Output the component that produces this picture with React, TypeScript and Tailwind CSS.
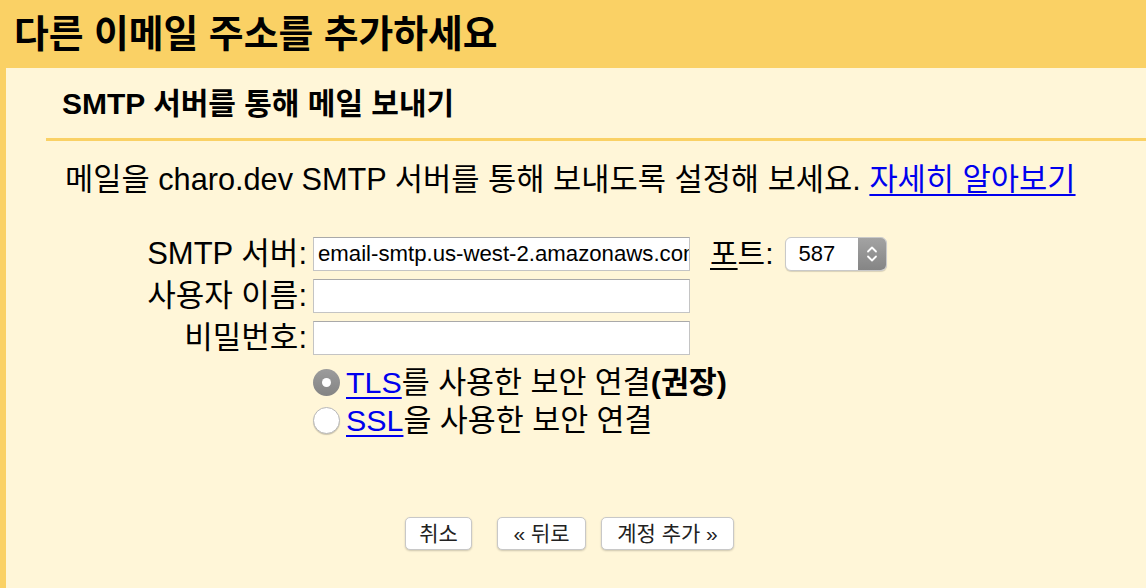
const FONT = "font-['Liberation_Sans','Noto_Sans_CJK_KR',sans-serif]";

function Field({ label, value, accent }: { label: string; value?: string; accent?: boolean }) {
  return (
    <>
      <label className="text-right text-[31px] leading-[34px] text-black">{label}</label>
      <div className="flex items-center gap-[20px]">
        <div className="h-[34px] w-[377px] overflow-hidden whitespace-nowrap border border-[#c4c4c4] border-t-[#a9a9a9] bg-white pl-[4px] text-[22.2px] leading-[32px] text-black">
          {value}
        </div>
        {accent && (
          <div className="flex items-center gap-[11px]">
            <span className="text-[30px] leading-[34px] text-black">
              <span className="underline decoration-[1.5px] underline-offset-[4px]">포</span>트:
            </span>
            <div className="flex h-[34px] w-[102px] overflow-hidden rounded-[6px] border border-[#c9c9c9] bg-white shadow-[0_1px_1px_rgba(0,0,0,0.15)]">
              <span className="flex-1 pl-[13px] text-[22px] leading-[32px] text-black">587</span>
              <span className="flex w-[28px] items-center justify-center bg-gradient-to-b from-[#a3a3a3] to-[#858585]">
                <svg width="14" height="20" viewBox="0 0 14 20" fill="none" stroke="white" strokeWidth="1.8" strokeLinecap="round" strokeLinejoin="round">
                  <path d="M3 7.5 L7 3.5 L11 7.5" />
                  <path d="M3 12.5 L7 16.5 L11 12.5" />
                </svg>
              </span>
            </div>
          </div>
        )}
      </div>
    </>
  );
}

function Radio({ checked, link, rest, bold }: { checked?: boolean; link: string; rest: string; bold?: string }) {
  return (
    <div className="flex h-[38px] items-center">
      {checked ? (
        <span className="flex h-[27px] w-[27px] items-center justify-center rounded-full bg-gradient-to-b from-[#9c9c9c] to-[#848484]">
          <span className="h-[9px] w-[9px] rounded-full bg-white" />
        </span>
      ) : (
        <span className="h-[27px] w-[27px] rounded-full border border-[#b8b8b8] bg-white shadow-[0_1px_1px_rgba(0,0,0,0.2)]" />
      )}
      <span className="ml-[6px] text-[30.4px] leading-[38px] text-black">
        <a href="#" className="text-[#0000ee] underline decoration-[2px] underline-offset-[4px]">
          {link}
        </a>
        {rest}
        {bold && <b>{bold}</b>}
      </span>
    </div>
  );
}

function Btn({ children, className }: { children: React.ReactNode; className?: string }) {
  return (
    <button
      className={`h-[33px] rounded-[5px] border border-[#c8c8c8] bg-white text-[21px] leading-[31px] text-[#222] shadow-[0_1px_2px_rgba(0,0,0,0.2)] ${className ?? ""}`}
    >
      {children}
    </button>
  );
}

export default function App() {
  return (
    <div className={`h-[588px] w-[1146px] overflow-hidden bg-[#fad165] ${FONT}`}>
      <div className="flex h-[68px] items-center pl-[14px] text-[37.8px] font-bold text-black">
        다른 이메일 주소를 추가하세요
      </div>

      <div className="ml-[6px] h-[520px] bg-[#fff6d8]">
        <div className="flex h-[70px] items-center pl-[56px] text-[30px] font-bold text-black">
          SMTP 서버를 통해 메일 보내기
        </div>
        <div className="ml-[40px] h-[3px] bg-[#fad165]" />

        <p className="mt-[21px] pl-[59px] text-[30.7px] leading-[36px] text-black">
          메일을 charo.dev SMTP 서버를 통해 보내도록 설정해 보세요.{" "}
          <a href="#" className="text-[#0000ee] underline decoration-[2px] underline-offset-[4px]">
            자세히 알아보기
          </a>
        </p>

        <div className="mt-[39px] grid grid-cols-[301px_auto] gap-x-[6px] gap-y-[8px]">
          <Field label="SMTP 서버:" value="email-smtp.us-west-2.amazonaws.com" accent />
          <Field label="사용자 이름:" />
          <Field label="비밀번호:" />
        </div>

        <div className="mt-[8px] pl-[307px]">
          <Radio checked link="TLS" rest="를 사용한 보안 연결" bold="(권장)" />
          <Radio link="SSL" rest="을 사용한 보안 연결" />
        </div>

        <div className="mt-[78px] flex pl-[399px]">
          <Btn className="w-[67px]">취소</Btn>
          <Btn className="ml-[25px] w-[89px]">« 뒤로</Btn>
          <Btn className="ml-[15px] w-[133px]">계정 추가 »</Btn>
        </div>
      </div>
    </div>
  );
}
